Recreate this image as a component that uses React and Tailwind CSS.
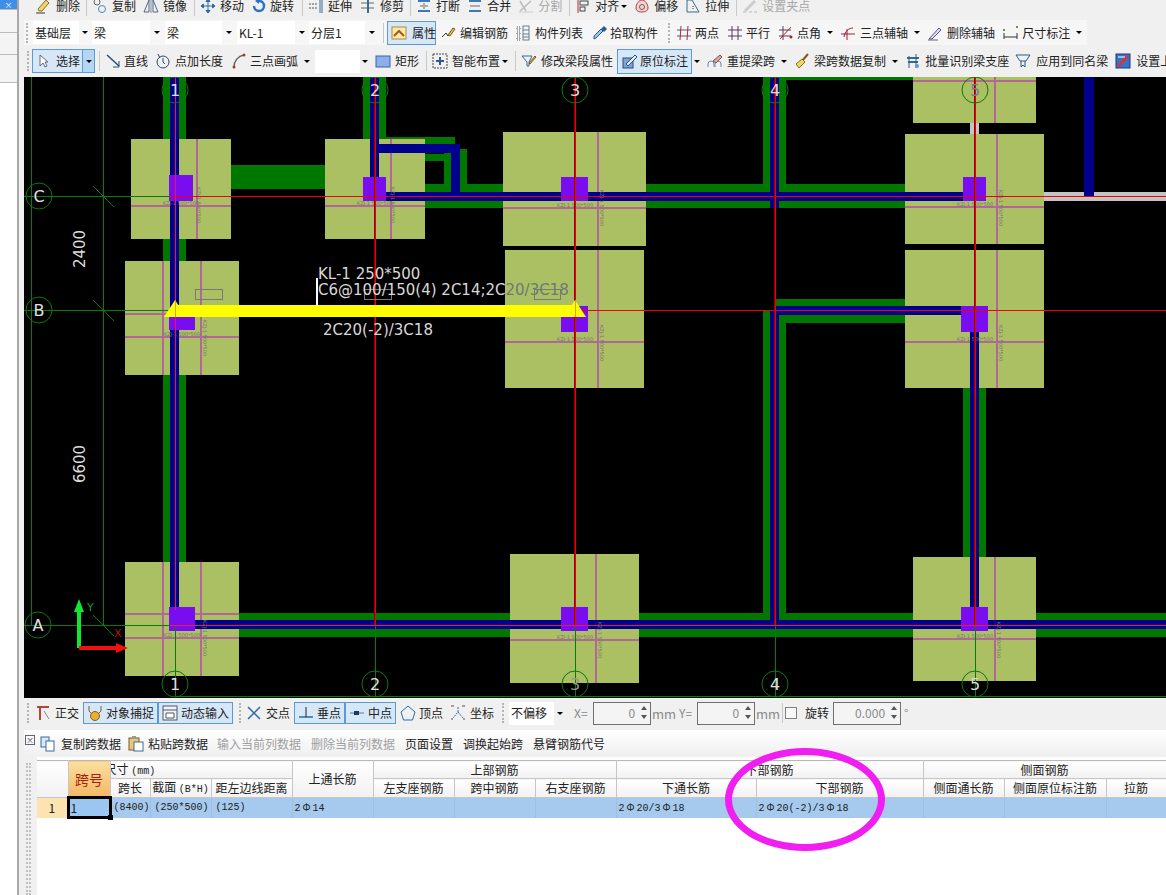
const FOOTINGS = [
  [131, 139, 100, 100], [325, 139, 100, 100], [503, 132, 143, 114], [505, 250, 139, 138],
  [913, 77, 123, 46], [905, 134, 139, 110], [905, 250, 139, 138], [125, 261, 114, 114],
  [125, 562, 114, 114], [510, 554, 129, 129], [913, 557, 123, 124],
]
const GREEN = [
  [163, 77, 23, 548], [186, 613, 980, 24], [363, 77, 23, 62], [231, 165, 94, 24],
  [386, 137, 69, 7], [425, 154, 19, 7], [444, 150, 7, 40], [460, 149, 7, 36],
  [425, 184, 80, 24], [646, 184, 259, 24], [763, 77, 23, 131], [786, 77, 127, 3],
  [763, 310, 23, 315], [775, 299, 130, 24], [963, 388, 23, 170],
]
const BLUE = [
  [170, 77, 9, 540], [370, 77, 9, 115], [378, 144, 77, 9], [451, 144, 9, 57],
  [379, 192, 590, 9], [1084, 77, 10, 119], [770, 77, 9, 131], [770, 310, 9, 315],
  [775, 306, 190, 9], [970, 332, 9, 275], [186, 620, 980, 9],
]
const COLUMNS = [
  [169, 175, 24, 26], [363, 177, 23, 24], [561, 177, 27, 24], [963, 177, 23, 24],
  [961, 306, 27, 26], [169, 317, 26, 13], [561, 306, 27, 26], [169, 607, 26, 24],
  [561, 607, 27, 24], [961, 607, 27, 24],
]
// pink rebar lines: vertical [x, y1, y2], horizontal [y, x1, x2]
const PINK_V = [
  [197, 139, 239], [391, 139, 239], [598, 132, 246], [598, 250, 388], [995, 77, 123],
  [997, 134, 244], [997, 250, 388], [163, 261, 375], [201, 261, 375], [163, 562, 676],
  [201, 562, 676], [596, 554, 683], [995, 557, 681],
]
const PINK_H = [
  [206, 131, 231], [206, 325, 425], [208, 503, 646], [342, 505, 644], [81, 913, 1036],
  [207, 905, 1044], [342, 905, 1044], [314, 125, 239], [337, 125, 239], [614, 125, 239],
  [638, 125, 239], [640, 510, 639], [639, 913, 1036],
]
// tiny section labels next to the columns
const TAGS = [
  [181, 205, 197, 187], [375, 205, 391, 187], [575, 207, 600, 190], [575, 341, 600, 325],
  [975, 206, 999, 190], [975, 341, 999, 325], [182, 336, 203, 320], [182, 637, 203, 620],
  [575, 639, 598, 622], [975, 638, 997, 622],
]

function Drawing() {
  const bubbles = [
    [39, 196, 'C', '#e0e0e0'], [39, 310, 'B', '#e0e0e0'], [38, 625, 'A', '#e0e0e0'],
    [175, 90, '1', '#e0e0e0'], [375, 90, '2', '#e0e0e0'], [575, 90, '3', '#e0e0e0'],
    [775, 90, '4', '#e0e0e0'], [975, 90, '5', '#6f7f98'], [175, 684, '1', '#e0e0e0'],
    [375, 684, '2', '#e0e0e0'], [575, 684, '3', '#8f9a88'], [775, 684, '4', '#e0e0e0'],
    [975, 684, '5', '#d8d8d8'],
  ]
  return (
    <svg width="1142" height="621" viewBox="24 77 1142 621" className="block bg-black">
      {GREEN.map(([x, y, w, h], i) => <rect key={i} x={x} y={y} width={w} height={h} fill="#007800" />)}
      {FOOTINGS.map(([x, y, w, h], i) => <rect key={i} x={x} y={y} width={w} height={h} fill="#abbf63" />)}
      <rect x="970" y="123" width="9" height="11" fill="#c4c4c4" />
      <rect x="1044" y="192" width="122" height="9" fill="#c4c4c4" />
      {PINK_V.map(([x, a, b], i) => <line key={i} x1={x} x2={x} y1={a} y2={b} stroke="#b4659a" strokeWidth="2" />)}
      {PINK_H.map(([y, a, b], i) => <line key={i} x1={a} x2={b} y1={y} y2={y} stroke="#b4659a" strokeWidth="2" />)}
      {BLUE.map(([x, y, w, h], i) => <rect key={i} x={x} y={y} width={w} height={h} fill="#00008c" />)}
      {TAGS.map(([x, y, vx, vy], i) => (
        <g key={i} fill="#77776f" fontSize="5" fontFamily="'DejaVu Sans', sans-serif">
          <text x={x} y={y} textAnchor="middle">KZJ-1 500*500</text>
          <text transform={`rotate(90 ${vx} ${vy})`} x={vx} y={vy}>KZJ-1 500*500</text>
        </g>
      ))}
      {COLUMNS.map(([x, y, w, h], i) => <rect key={i} x={x} y={y} width={w} height={h} fill="#7a0cf0" />)}

      {/* grid lines */}
      <g fill="#0a7a0a">
        <rect x="31" y="77" width="1" height="548" />
        <rect x="103" y="77" width="1" height="548" />
        <rect x="24" y="196" width="146" height="1" />
        <rect x="24" y="310" width="146" height="1" />
        <rect x="24" y="625" width="146" height="1" />
        {[175, 375, 575, 775, 975].map((x) => <rect key={x} x={x} y="626" width="1" height="71" />)}
        <rect x="175" y="696" width="991" height="1" />
      </g>
      <g stroke="#0a7a0a" strokeWidth="1">
        <line x1="93" x2="114" y1="186" y2="207" />
        <line x1="93" x2="114" y1="300" y2="321" />
        <line x1="93" x2="114" y1="615" y2="636" />
      </g>
      <g fill="#f00000">
        <rect x="170" y="196" width="996" height="1" />
        <rect x="170" y="310" width="996" height="1" />
        {[375, 575, 775, 975].map((x) => (
          <g key={x}>
            <rect x={x - 1} y="77" width="1" height="549" fill="#8c0000" />
            <rect x={x} y="77" width="1" height="549" />
          </g>
        ))}
        <rect x="175" y="77" width="1" height="533" fill="#f01060" />
        <rect x="170" y="625" width="996" height="1" fill="#e81a50" />
      </g>

      {bubbles.map(([x, y, label, color], i) => (
        <g key={i}>
          <circle cx={x} cy={y} r="13" fill="none" stroke="#0a7a0a" strokeWidth="1" />
          <text x={x} y={y + 6} textAnchor="middle" fontSize="16" fill={color} fontFamily="'DejaVu Sans', sans-serif">{label}</text>
        </g>
      ))}
      <g fontSize="15" fill="#dcdcdc" fontFamily="'DejaVu Sans', sans-serif" textAnchor="middle">
        <text transform="rotate(-90 85 249)" x="85" y="249">2400</text>
        <text transform="rotate(-90 85 464)" x="85" y="464">6600</text>
      </g>

      {/* selected beam */}
      <rect x="175" y="305" width="400" height="12" fill="#ffff00" />
      <polygon points="175,300 164,317 186,317" fill="#ffff00" />
      <polygon points="575,300 564,317 586,317" fill="#ffff00" />
      <rect x="175" y="300" width="1" height="17" fill="#e6a020" />
      <rect x="575" y="300" width="1" height="17" fill="#e6a020" />
      <g fill="none" stroke="#7a7a70" strokeWidth="1">
        <rect x="195.5" y="289.5" width="27" height="10" />
        <rect x="364.5" y="289.5" width="27" height="10" />
        <rect x="534.5" y="289.5" width="26" height="10" />
      </g>
      <g fontSize="15" fontFamily="'DejaVu Sans', sans-serif" fill="#d8d8d8">
        <text x="318" y="279">KL-1 250*500</text>
        <text x="318" y="295">C6@100/150(4) 2C14;2C<tspan fill="#6d7a78">20/3C18</tspan></text>
        <text x="323" y="335">2C20(-2)/3C18</text>
      </g>
      <rect x="316" y="278" width="2" height="27" fill="#ffffff" />

      {/* coordinate axes */}
      <line x1="79" x2="79" y1="648" y2="610" stroke="#10e830" strokeWidth="4" />
      <polygon points="79,599 74,612 84,612" fill="#10e830" />
      <line x1="79" x2="118" y1="648" y2="648" stroke="#f01010" strokeWidth="4" />
      <polygon points="128,648 116,643 116,653" fill="#f01010" />
      <text x="87" y="611" fontSize="11" fill="#10a030" fontFamily="'DejaVu Sans', sans-serif">Y</text>
      <text x="114" y="637" fontSize="11" fill="#c01010" fontFamily="'DejaVu Sans', sans-serif">X</text>
    </svg>
  )
}

function Ic({ children }) {
  return (
    <svg width="16" height="16" viewBox="0 0 16 16" fill="none" className="shrink-0">
      {children}
    </svg>
  )
}

const icons = {
  erase: <Ic><path d="M3 11 11 2l3 3-7 8H4z" fill="#f2d36a" stroke="#8a6a30" /><path d="M1 15h9" stroke="#333" /></Ic>,
  copy: <Ic><circle cx="5" cy="4" r="3" stroke="#666" /><circle cx="10" cy="11" r="3.5" stroke="#4a86c8" /></Ic>,
  mirror: <Ic><path d="M1 14 6 2v12z" stroke="#4a6a8a" /><path d="M15 14 10 2v12z" stroke="#4a6a8a" /><path d="M8 1v14" stroke="#888" /></Ic>,
  move: <Ic><path d="M8 1v14M1 8h14M8 1 6 3.500h4zM8 15l-2-2.500h4zM1 8l2.500-2v4zM15 8l-2.500-2v4z" stroke="#2a6aa8" fill="#2a6aa8" /></Ic>,
  rotate: <Ic><path d="M8 3a5 5 0 1 1-5 5" stroke="#2a72c8" strokeWidth="2.500" /><path d="M8 0v6L4 3z" fill="#2a72c8" /></Ic>,
  extend: <Ic><path d="M1 6h8M1 10h8" stroke="#555" strokeDasharray="2 1" /><path d="M12 1v14M14 1v14" stroke="#3a6a98" /></Ic>,
  trim: <Ic><path d="M1 5h13M1 10h13" stroke="#666" /><path d="M8 1v14" stroke="#3a6a98" strokeWidth="2" /></Ic>,
  split: <Ic><path d="M2 3h12M2 13h12" stroke="#3a78b8" strokeWidth="2" /><path d="M4 8h3M9 8h3M8 5v6" stroke="#666" /></Ic>,
  join: <Ic><path d="M2 3h12M2 13h12" stroke="#3a78b8" strokeWidth="2" /><path d="M3 8h10" stroke="#666" /></Ic>,
  cut: <Ic><path d="M2 13 13 3M2 3l6 10" stroke="#bbb" strokeWidth="1.500" /><path d="M1 14h14" stroke="#ccc" /></Ic>,
  align: <Ic><path d="M3 1v14" stroke="#b03030" /><rect x="5" y="3" width="8" height="4" stroke="#444" /><rect x="5" y="9" width="5" height="4" stroke="#444" /></Ic>,
  offset: <Ic><path d="M8 2c-3 0-6 4-6 8 0 3 3 4 6 4s6-1 6-4c0-4-3-8-6-8z" fill="#f6d0d0" stroke="#b04040" /><circle cx="8" cy="9" r="2.500" stroke="#666" /></Ic>,
  stretch: <Ic><path d="M2 14V2h5l7 12z" stroke="#3a6a98" /><path d="M8 8v4" stroke="#333" strokeDasharray="1 1" /></Ic>,
  grip: <Ic><path d="M3 13 13 3" stroke="#ccc" strokeWidth="3" /><path d="M1 14h3M7 14h3M12 14h3" stroke="#bbb" /></Ic>,
  props: <Ic><rect x="1" y="2" width="14" height="12" fill="#fbe9b0" stroke="#b08a30" /><path d="M3 11 8 6l5 5" stroke="#a05a10" strokeWidth="2" /></Ic>,
  rebar: <Ic><path d="M2 12 6 8l2 3 6-8" stroke="#333" /><path d="M8 10l5-7 2 1-5 7z" fill="#e8c050" stroke="#7a5a20" /></Ic>,
  list: <Ic><path d="M2 2h3v3H2zM2 7h3v3H2zM2 12h3v3H2z" stroke="#556" strokeDasharray="1 1" /><rect x="8" y="1" width="6" height="14" stroke="#6a7a8a" /><path d="M8 5h6M8 9h6M8 12h6" stroke="#6a7a8a" /></Ic>,
  pick: <Ic><path d="M2 14l2-1 7-7-2-2-7 7z" fill="#9cc4ec" stroke="#2a5a98" /><path d="M9 4l3-3 3 3-3 3z" fill="#2a5a98" /></Ic>,
  twoPt: <Ic><path d="M1 5h14M1 11h14" stroke="#5a5a7a" /><path d="M5 1l-1 14M12 1l-1 14" stroke="#a83030" /></Ic>,
  par: <Ic><path d="M1 5h14M1 11h14M5 1v14M11 1v14" stroke="#5a3a5a" /></Ic>,
  angle: <Ic><path d="M1 5h12M1 11h12M5 1v14" stroke="#5a3a5a" /><path d="M2 14 13 2" stroke="#c02020" /><circle cx="13" cy="12" r="1.500" fill="#c02020" /></Ic>,
  threeAx: <Ic><path d="M1 9h14M7 4v11" stroke="#a02030" /><path d="M4 12c1-6 5-9 9-9" stroke="#a02030" /></Ic>,
  delAx: <Ic><path d="M2 14 12 3l2 2L5 14z" fill="#e6e2f2" stroke="#5a4a8a" /><path d="M1 15h10" stroke="#666" /></Ic>,
  dim: <Ic><path d="M1 8v6M14 8v6M1 12h13" stroke="#333" /><rect x="0" y="4" width="2" height="2" fill="#5a9a3a" /><rect x="13" y="1" width="2" height="2" fill="#5a9a3a" /></Ic>,
  line: <Ic><path d="M2 2l12 11" stroke="#24507a" strokeWidth="1.500" /><path d="M14 8v6H8" stroke="#24507a" /></Ic>,
  addLen: <Ic><circle cx="8" cy="9" r="6" stroke="#2a4a6a" /><path d="M8 5v4l2 2" stroke="#2a4a6a" /><path d="M3 1l2 4" stroke="#2a4a6a" /></Ic>,
  arc: <Ic><path d="M3 14C3 8 7 3 13 2" stroke="#666" strokeWidth="1.500" /><circle cx="3" cy="14" r="1.500" fill="#a04020" /><circle cx="13" cy="2" r="1.500" fill="#a04020" /></Ic>,
  rect: <Ic><rect x="1" y="3" width="14" height="11" fill="#8eb0ea" stroke="#3a62a8" /></Ic>,
  smart: <Ic><rect x="1" y="1" width="14" height="14" stroke="#444" strokeDasharray="2 1" /><path d="M8 4v8M4 8h8" stroke="#2a5a98" strokeWidth="2" /></Ic>,
  edit: <Ic><path d="M1 3h10L8 9v4H6V9z" stroke="#3a6a98" /><path d="M8 10l6-7 1 1-6 7z" fill="#e8c050" stroke="#7a5a20" /></Ic>,
  mark: <Ic><rect x="1" y="5" width="10" height="10" fill="#7ea6d8" stroke="#2a4a8a" /><path d="M4 11 13 2l2 2-9 9z" fill="#e4ecf8" stroke="#2a4a8a" /></Ic>,
  respan: <Ic><path d="M1 14v-3a3 3 0 0 1 6 0v3M8 14v-3a3 3 0 0 1 6 0v3" stroke="#6a8aaa" /><path d="M6 8l7-6 2 2-6 6z" fill="#d8a8a0" stroke="#805050" /></Ic>,
  broom: <Ic><path d="M14 1 8 8" stroke="#7a5a20" strokeWidth="2" /><path d="M8 6 2 11l3 4 6-6z" fill="#f0d860" stroke="#8a7020" /></Ic>,
  batch: <Ic><path d="M2 5h12M3 9h10" stroke="#2a6a9a" strokeWidth="2" /><path d="M4 3v12M11 1v14" stroke="#3a5a7a" /><circle cx="12" cy="13" r="2" fill="#6a9ac8" /></Ic>,
  apply: <Ic><path d="M1 2h14l-4 6H5z" stroke="#2a5a8a" /><path d="M6 8v6l2-2 2 2V8" stroke="#2a5a8a" /></Ic>,
  setTop: <Ic><rect x="1" y="1" width="14" height="14" fill="#3a72c8" stroke="#1a3a7a" /><path d="M3 13 13 3" stroke="#e03030" strokeWidth="2.500" /><path d="M3 4h7" stroke="#fff" /></Ic>,
  ortho: <Ic><path d="M2 2h12M5 2v13" stroke="#b04838" strokeWidth="2" /><path d="M9 6l5 8" stroke="#888" /></Ic>,
  snap: <Ic><path d="M2 1v5M14 1v5M2 6l4 4M14 6l-4 4" stroke="#8a5a20" /><circle cx="8" cy="11" r="4.500" fill="#e8b030" stroke="#8a5a20" /></Ic>,
  dyn: <Ic><rect x="1" y="1" width="14" height="14" fill="#eef3f8" stroke="#556" /><path d="M1 5h14" stroke="#556" /><path d="M4 8h8v5H4z" fill="#fff" stroke="#556" /></Ic>,
  cross: <Ic><path d="M2 2l12 12M14 2 2 14" stroke="#2a68b0" strokeWidth="1.500" /></Ic>,
  perp: <Ic><path d="M1 12h14" stroke="#2a68b0" strokeWidth="1.500" /><path d="M8 2v10" stroke="#222" /></Ic>,
  mid: <Ic><path d="M1 8h14" stroke="#5a7a9a" /><rect x="5" y="6" width="5" height="4" fill="#1a3a6a" /></Ic>,
  top: <Ic><path d="M8 1l7 6-2.500 8h-9L1 7z" stroke="#2a6ab0" /></Ic>,
  coord: <Ic><path d="M8 2v5L3 13M8 7l5 6" stroke="#2a68b0" strokeDasharray="2 1" /><path d="M1 1h3M12 1h3M1 14h2M13 14h2" stroke="#555" /></Ic>,
  copyRow: <Ic><rect x="1" y="1" width="8" height="10" fill="#d8e6f6" stroke="#3a6a9a" /><rect x="6" y="5" width="8" height="10" fill="#fff" stroke="#3a6a9a" /></Ic>,
  paste: <Ic><rect x="1" y="2" width="10" height="12" fill="#e8c878" stroke="#7a5a20" /><rect x="6" y="6" width="9" height="9" fill="#fff" stroke="#3a6a9a" /><rect x="4" y="0" width="4" height="3" fill="#999" /></Ic>,
  cursor: <svg width="10" height="14" viewBox="0 0 10 14" className="shrink-0"><path d="M1 1v11l3-3 2 4 2-1-2-4h3z" fill="#fff" stroke="#667" /></svg>,
}

function Tool({ icon, text, gap = 'gap-[4px]', className = '', muted }) {
  return (
    <div className={`flex shrink-0 items-center ${gap} ${className}`}>
      {icons[icon]}
      <span className={`whitespace-nowrap ${muted ? 'text-[#a8a8a8]' : ''}`}>{text}</span>
    </div>
  )
}

function Sep({ className = '' }) {
  return <div className={`h-[20px] w-px shrink-0 bg-[#c8c8c8] ${className}`} />
}

function Grip({ className = '' }) {
  return <div className={`h-[20px] w-[3px] shrink-0 border-l-[2px] border-dotted border-[#b4b4b4] ${className}`} />
}

function Caret({ className = '' }) {
  return (
    <div className={`flex w-[6px] shrink-0 justify-center ${className}`}>
      <div className="h-0 w-0 border-x-[3px] border-t-[3px] border-x-transparent border-t-black" />
    </div>
  )
}

function Combo({ text, box, arrow, className = '' }) {
  return (
    <div className={`flex h-[23px] shrink-0 items-center ${className}`}>
      <div className={`flex h-full items-center bg-white pl-[2px] ${box}`}>{text}</div>
      <div className={`flex justify-center ${arrow}`}><Caret /></div>
    </div>
  )
}

function Toggle({ icon, text, gap = 'gap-[3px]', className = '' }) {
  return (
    <div className={`flex h-[22px] shrink-0 items-center border border-[#5b9bd5] bg-[#d6e8f8] pl-[3px] ${gap} ${className}`}>
      {icons[icon]}
      <span className="whitespace-nowrap">{text}</span>
    </div>
  )
}

function Spin({ value, width }) {
  return (
    <div className={`relative flex h-[23px] shrink-0 items-center justify-end border border-[#707070] bg-[#f4f4f4] pr-[15px] text-[#8a8a8a] ${width}`}>
      {value}
      <div className="absolute right-[3px] top-[3px] flex flex-col gap-[5px]">
        <div className="h-0 w-0 border-x-[3px] border-b-[4px] border-x-transparent border-b-[#555]" />
        <div className="h-0 w-0 border-x-[3px] border-t-[4px] border-x-transparent border-t-[#555]" />
      </div>
    </div>
  )
}

function Bar() {
  return <span className="inline-block w-[12px] text-center font-['Noto_Sans_CJK_SC']">Φ</span>
}

const th = 'border-r border-b border-[#c6c6c6] bg-gradient-to-b from-white to-[#f1f1f1] p-0 text-center font-normal'
const td = 'border-r border-[#9fbfe0] bg-[#a6c9ee] p-0 pl-[2px] text-left font-["Liberation_Mono"] text-[10px]'
const small = 'font-["Liberation_Mono"] text-[10px]'

function SpanTable() {
  return (
    <table className="w-[1129px] table-fixed border-collapse border-t border-[#b8b8b8] text-[12px] leading-none text-[#222]">
      <colgroup>
        <col className="w-[31px]" />
        <col className="w-[42px]" />
        <col className="w-[40px]" />
        <col className="w-[61px]" />
        <col className="w-[81px]" />
        <col className="w-[81px]" />
        <col className="w-[81px]" />
        <col className="w-[81px]" />
        <col className="w-[81px]" />
        <col className="w-[140px]" />
        <col className="w-[167px]" />
        <col className="w-[81px]" />
        <col className="w-[102px]" />
        <col className="w-[60px]" />
      </colgroup>
      <thead>
        <tr className="h-[18px]">
          <th rowSpan={2} className={th} />
          <th rowSpan={2} className="border-r border-b border-[#c6c6c6] bg-gradient-to-b from-[#fbdf9e] to-[#f3b866] p-0 text-center text-[14px] font-normal text-[#a82010]">跨号</th>
          <th colSpan={3} className={`${th} overflow-hidden text-left`}>
            <span className="relative -left-[6px] whitespace-nowrap">尺寸 <span className={small}>(mm)</span></span>
          </th>
          <th rowSpan={2} className={th}>上通长筋</th>
          <th colSpan={3} className={th}>上部钢筋</th>
          <th colSpan={2} className={th}>下部钢筋</th>
          <th colSpan={3} className={th}>侧面钢筋</th>
        </tr>
        <tr className="h-[19px]">
          <th className={th}>跨长</th>
          <th className={th}>截面 <span className={small}>(B*H)</span></th>
          <th className={th}>距左边线距离</th>
          <th className={th}>左支座钢筋</th>
          <th className={th}>跨中钢筋</th>
          <th className={th}>右支座钢筋</th>
          <th className={th}>下通长筋</th>
          <th className={th}>下部钢筋</th>
          <th className={th}>侧面通长筋</th>
          <th className={th}>侧面原位标注筋</th>
          <th className={th}>拉筋</th>
        </tr>
      </thead>
      <tbody>
        <tr className="h-[20px]">
          <td className="bg-[#fde3b0] p-0 text-center">1</td>
          <td className="relative border-[3px] border-black bg-[#9cc6f2] p-0 pl-[1px] text-left">
            1
            <div className="absolute -bottom-[4px] -right-[4px] h-[5px] w-[5px] bg-black" />
          </td>
          <td className={td}>(8400)</td>
          <td className={`${td} pl-[4px]`}>(250*500)</td>
          <td className={`${td} pl-[4px]`}>(125)</td>
          <td className={td}>2<Bar />14</td>
          <td className={td} />
          <td className={td} />
          <td className={td} />
          <td className={td}>2<Bar />20/3<Bar />18</td>
          <td className={td}>2<Bar />20(-2)/3<Bar />18</td>
          <td className={td} />
          <td className={td} />
          <td className={td} />
        </tr>
      </tbody>
    </table>
  )
}

export default function App() {
  return (
    <div className="relative flex h-[895px] w-[1166px] overflow-hidden bg-[#f0f0f0] font-['Noto_Sans_CJK_SC','Noto_Sans',sans-serif] text-[12px] leading-none text-[#222]">
      {/* left dock */}
      <div className="flex w-[24px] shrink-0">
        <div className="flex w-[19px] flex-col border-r-2 border-[#a8a8a8] bg-white">
          <div className="flex h-[9px] items-center justify-center overflow-hidden bg-[#3f8fe8] text-[8px] leading-[8px] text-white">×</div>
          <div className="h-[23px] border-t border-[#bcbcbc] bg-[#f4f4f4]" />
          <div className="h-[22px] border-t border-[#bcbcbc] bg-[#f4f4f4]" />
          <div className="h-[28px] border-t border-[#bcbcbc] bg-[#f4f4f4]" />
          <div className="flex-1 border-t border-[#bcbcbc] bg-white" />
        </div>
      </div>

      <div className="flex w-[1142px] flex-col">
        {/* edit toolbar, cut off at the top of the shot */}
        <div className="flex h-[20px] items-start overflow-hidden pl-[11px]">
          <div className="flex h-[12px] items-center">
            <Tool icon="erase" text="删除" gap="gap-[5px]" />
            <Sep className="ml-[6px]" />
            <Tool icon="copy" text="复制" className="ml-[5px]" />
            <Tool icon="mirror" text="镜像" className="ml-[7px]" />
            <Sep className="ml-[7px]" />
            <Tool icon="move" text="移动" className="ml-[5px]" />
            <Tool icon="rotate" text="旋转" gap="gap-[3px]" className="ml-[7px]" />
            <Sep className="ml-[8px]" />
            <Tool icon="extend" text="延伸" className="ml-[5px]" />
            <Tool icon="trim" text="修剪" className="ml-[8px]" />
            <Sep className="ml-[6px]" />
            <Tool icon="split" text="打断" className="ml-[5px]" />
            <Tool icon="join" text="合并" className="ml-[7px]" />
            <Tool icon="cut" text="分割" muted className="ml-[7px]" />
            <Sep className="ml-[7px]" />
            <Tool icon="align" text="对齐" className="ml-[5px]" />
            <Caret className="ml-[2px]" />
            <Tool icon="offset" text="偏移" className="ml-[7px]" />
            <Tool icon="stretch" text="拉伸" className="ml-[7px]" />
            <Sep className="ml-[7px]" />
            <Tool icon="grip" text="设置夹点" muted className="ml-[5px]" />
          </div>
        </div>

        {/* member selection toolbar */}
        <div className="flex h-[25px] w-[1063px] items-center bg-[#f6f6f6] pl-[2px]">
          <Grip />
          <Combo text="基础层" box="w-[46px]" arrow="w-[11px]" className="ml-[4px]" />
          <Combo text="梁" box="w-[58px]" arrow="w-[14px]" className="ml-[2px]" />
          <Combo text="梁" box="w-[57px]" arrow="w-[14px]" className="ml-[1px]" />
          <Combo text="KL-1" box="w-[58px]" arrow="w-[13px]" className="ml-[1px]" />
          <Combo text="分层1" box="w-[56px]" arrow="w-[14px]" className="ml-[1px]" />
          <Sep className="ml-[4px]" />
          <Toggle icon="props" text="属性" gap="gap-[5px]" className="ml-[3px] h-[24px] w-[49px]" />
          <Tool icon="rebar" text="编辑钢筋" className="ml-[4px]" />
          <Tool icon="list" text="构件列表" className="ml-[7px]" />
          <Tool icon="pick" text="拾取构件" gap="gap-[2px]" className="ml-[9px]" />
          <Grip className="ml-[10px]" />
          <Tool icon="twoPt" text="两点" gap="gap-[3px]" className="ml-[5px]" />
          <Tool icon="par" text="平行" gap="gap-[3px]" className="ml-[8px]" />
          <Tool icon="angle" text="点角" gap="gap-[3px]" className="ml-[8px]" />
          <Caret className="ml-[6px]" />
          <Tool icon="threeAx" text="三点辅轴" className="ml-[7px]" />
          <Caret className="ml-[6px]" />
          <Tool icon="delAx" text="删除辅轴" className="ml-[7px]" />
          <Tool icon="dim" text="尺寸标注" gap="gap-[3px]" className="ml-[8px]" />
          <Caret className="ml-[6px]" />
        </div>

        {/* drawing toolbar */}
        <div className="flex h-[32px] items-center overflow-hidden pl-[3px]">
          <Grip />
          <div className="ml-[2px] flex h-[24px] w-[63px] shrink-0 items-center border border-[#5b9bd5] bg-[#d6e8f8]">
            <div className="flex w-[49px] items-center pl-[6px]">
              {icons.cursor}
              <span className="ml-[7px]">选择</span>
            </div>
            <div className="flex h-full flex-1 items-center justify-center border-l border-[#5b9bd5] bg-[#b4d6f4]"><Caret /></div>
          </div>
          <Sep className="ml-[4px]" />
          <Tool icon="line" text="直线" gap="gap-[3px]" className="ml-[5px]" />
          <Tool icon="addLen" text="点加长度" className="ml-[7px]" />
          <Tool icon="arc" text="三点画弧" gap="gap-[3px]" className="ml-[8px]" />
          <Caret className="ml-[6px]" />
          <Combo text="" box="w-[45px]" arrow="w-[10px]" className="ml-[5px]" />
          <Tool icon="rect" text="矩形" className="ml-[5px]" />
          <Sep className="ml-[7px]" />
          <Tool icon="smart" text="智能布置" className="ml-[5px]" />
          <Caret className="ml-[2px]" />
          <Sep className="ml-[7px]" />
          <Tool icon="edit" text="修改梁段属性" className="ml-[5px]" />
          <Toggle icon="mark" text="原位标注" gap="gap-[2px]" className="ml-[4px] h-[25px] w-[75px] pl-[4px]" />
          <Caret className="ml-[2px]" />
          <Tool icon="respan" text="重提梁跨" className="ml-[7px]" />
          <Caret className="ml-[6px]" />
          <Tool icon="broom" text="梁跨数据复制" className="ml-[7px]" />
          <Caret className="ml-[6px]" />
          <Tool icon="batch" text="批量识别梁支座" className="ml-[7px]" />
          <Tool icon="apply" text="应用到同名梁" gap="gap-[5px]" className="ml-[6px]" />
          <Tool icon="setTop" text="设置上部" gap="gap-[5px]" className="ml-[7px]" />
        </div>

        <Drawing />

        {/* snap toolbar */}
        <div className="flex h-[32px] items-center overflow-hidden pb-[2px] pl-[3px]">
          <Grip />
          <Tool icon="ortho" text="正交" className="ml-[5px]" />
          <Toggle icon="snap" text="对象捕捉" className="ml-[4px] w-[75px]" />
          <Toggle icon="dyn" text="动态输入" className="w-[75px]" />
          <Grip className="ml-[6px]" />
          <Tool icon="cross" text="交点" className="ml-[4px]" />
          <Toggle icon="perp" text="垂点" className="ml-[4px] w-[51px]" />
          <Toggle icon="mid" text="中点" className="w-[51px]" />
          <Tool icon="top" text="顶点" gap="gap-[3px]" className="ml-[4px]" />
          <Tool icon="coord" text="坐标" className="ml-[7px]" />
          <Grip className="ml-[8px]" />
          <Combo text="不偏移" box="w-[45px]" arrow="w-[12px]" className="ml-[4px]" />
          <span className="ml-[8px] w-[19px] text-[#8a8a8a]">X=</span>
          <Spin value="0" width="w-[58px]" />
          <span className="ml-[1px] w-[27px] text-[13px] text-[#8a8a8a]">mm</span>
          <span className="w-[18px] text-[#8a8a8a]">Y=</span>
          <Spin value="0" width="w-[58px]" />
          <span className="ml-[1px] w-[26px] text-[13px] text-[#8a8a8a]">mm</span>
          <Sep className="mr-[2px]" />
          <div className="h-[12px] w-[12px] shrink-0 border border-[#808080] bg-[#f8f8f8]" />
          <span className="ml-[8px]">旋转</span>
          <div className="ml-[4px]"><Spin value="0.000" width="w-[68px]" /></div>
          <span className="ml-[3px] text-[#8a8a8a]">°</span>
        </div>

        {/* span table toolbar */}
        <div className="flex h-[27px] items-center bg-gradient-to-b from-white to-[#efefef] pl-[1px]">
          <div className="mb-[8px] flex h-[10px] w-[10px] shrink-0 items-center justify-center overflow-hidden border border-[#667] text-[8px] leading-[8px] text-[#445]">×</div>
          <Tool icon="copyRow" text="复制跨数据" gap="gap-[5px]" className="ml-[5px]" />
          <Tool icon="paste" text="粘贴跨数据" className="ml-[7px]" />
          <span className="ml-[9px] text-[#a0a0a0]">输入当前列数据</span>
          <span className="ml-[10px] text-[#a0a0a0]">删除当前列数据</span>
          <span className="ml-[10px]">页面设置</span>
          <span className="ml-[10px]">调换起始跨</span>
          <span className="ml-[10px]">悬臂钢筋代号</span>
        </div>

        {/* span table */}
        <div className="flex flex-1">
          <div className="flex w-[13px] shrink-0 justify-start pl-[2px] pt-[6px]">
            <div className="h-full w-[5px] border-x-[2px] border-dotted border-[#c0c0c0]" />
          </div>
          <div className="flex-1 bg-white pt-[3px]">
            <SpanTable />
          </div>
        </div>
      </div>

      {/* hand-drawn annotation ring */}
      <div className="absolute left-[725px] top-[748px] h-[103px] w-[160px] rounded-[50%] border-[7px] border-[#f01ef0]" />
    </div>
  )
}
